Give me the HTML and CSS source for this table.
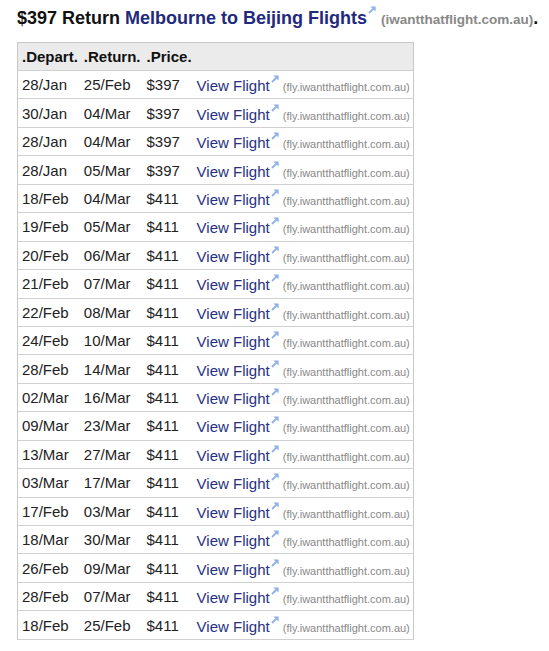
FILE: index.html
```html
<!DOCTYPE html>
<html>
<head>
<meta charset="utf-8">
<link rel="stylesheet" href="styles.css">
</head>
<body>
<h1 class="title">$397 Return <a class="title-link" href="#">Melbourne to Beijing Flights</a><svg class="ext ext-title" viewBox="0 0 8 8"><path d="M1 7 L6.2 1.8" stroke="#8fb0e8" stroke-width="1.8"/><path d="M2.4 0.4 H7.6 V5.6 Z" fill="#8fb0e8"/></svg> <span class="src">(iwantthatflight.com.au)</span>.</h1>
<table class="flights">
<thead><tr><th>.Depart.</th><th>.Return.</th><th>.Price.</th><th class="wide"></th></tr></thead>
<tbody id="rows"></tbody>
</table>
<script src="script.js"></script>
</body>
</html>
```

FILE: script.js
```js
var data = [
["28/Jan","25/Feb","$397"],["30/Jan","04/Mar","$397"],["28/Jan","04/Mar","$397"],["28/Jan","05/Mar","$397"],
["18/Feb","04/Mar","$411"],["19/Feb","05/Mar","$411"],["20/Feb","06/Mar","$411"],["21/Feb","07/Mar","$411"],
["22/Feb","08/Mar","$411"],["24/Feb","10/Mar","$411"],["28/Feb","14/Mar","$411"],["02/Mar","16/Mar","$411"],
["09/Mar","23/Mar","$411"],["13/Mar","27/Mar","$411"],["03/Mar","17/Mar","$411"],["17/Feb","03/Mar","$411"],
["18/Mar","30/Mar","$411"],["26/Feb","09/Mar","$411"],["28/Feb","07/Mar","$411"],["18/Feb","25/Feb","$411"]
];
var icon = '<svg class="ext" viewBox="0 0 8 8"><path d="M1 7 L6.2 1.8" stroke="#8fb0e8" stroke-width="1.8"/><path d="M2.4 0.4 H7.6 V5.6 Z" fill="#8fb0e8"/></svg>';
var html = '';
data.forEach(function (r) {
  html += '<tr><td>' + r[0] + '</td><td>' + r[1] + '</td><td>' + r[2] +
    '</td><td class="wide"><a class="view" href="#">View Flight</a>' + icon +
    ' <span class="small-src">(fly.iwantthatflight.com.au)</span></td></tr>';
});
document.getElementById('rows').innerHTML = html;
```

FILE: styles.css
```css
body {
  margin: 0;
  padding: 6px 0 0 17px;
  font-family: "Liberation Sans", Arial, sans-serif;
  background: #fff;
  color: #222;
}
.title {
  font-size: 18px;
  font-weight: bold;
  margin: 0 0 13px 0;
  color: #111;
  white-space: nowrap;
}
.title-link {
  color: #1f2a7c;
  text-decoration: none;
}
.src {
  font-size: 13.5px;
  color: #888;
}
.ext {
  width: 8px;
  height: 8px;
  vertical-align: 8px;
  margin-left: 1px;
}
.ext-title {
  vertical-align: 10px;
}
.flights {
  border-collapse: collapse;
  border: 1px solid #c8c8c8;
  width: 397px;
  font-size: 15px;
}
.flights th {
  background: #ebebeb;
  text-align: left;
  font-weight: bold;
  padding: 0 3px 0 3px;
  height: 27px;
  border-bottom: 1px solid #d0d0d0;
  color: #111;
}
.flights td {
  padding: 0 3px 0 3px;
  height: 27.45px;
  border-bottom: 1px solid #d0d0d0;
  white-space: nowrap;
  color: #222;
}
.flights th:first-child,
.flights td:first-child {
  padding-left: 4px;
}
.flights .wide {
  width: 100%;
  padding-left: 2px;
  padding-right: 2px;
}
.view {
  color: #27317f;
  text-decoration: none;
}
.small-src {
  font-size: 11px;
  color: #888;
}
```
